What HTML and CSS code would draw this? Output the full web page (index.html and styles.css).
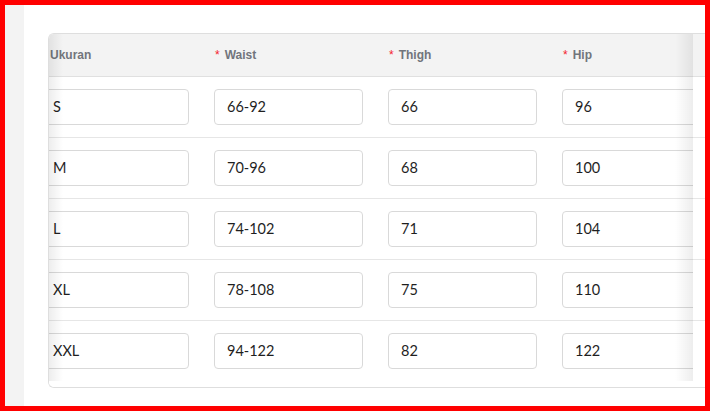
FILE: index.html
```html
<!DOCTYPE html>
<html>
<head>
<meta charset="utf-8">
<link rel="stylesheet" href="styles.css">
</head>
<body>
<div class="frame">
  <div class="side"></div>
  <div class="main">
    <div class="table">
      <div class="body">
        <div class="scroll">
          <div class="grid">
            <div class="row head">
              <div class="cell first"><span class="title">Ukuran</span></div>
              <div class="cell"><span class="req">*</span><span class="title">Waist</span></div>
              <div class="cell"><span class="req">*</span><span class="title">Thigh</span></div>
              <div class="cell"><span class="req">*</span><span class="title">Hip</span></div>
            </div>
            <div class="row">
              <div class="cell"><div class="input">S</div></div>
              <div class="cell"><div class="input">66-92</div></div>
              <div class="cell"><div class="input">66</div></div>
              <div class="cell"><div class="input">96</div></div>
            </div>
            <div class="row">
              <div class="cell"><div class="input">M</div></div>
              <div class="cell"><div class="input">70-96</div></div>
              <div class="cell"><div class="input">68</div></div>
              <div class="cell"><div class="input">100</div></div>
            </div>
            <div class="row">
              <div class="cell"><div class="input">L</div></div>
              <div class="cell"><div class="input">74-102</div></div>
              <div class="cell"><div class="input">71</div></div>
              <div class="cell"><div class="input">104</div></div>
            </div>
            <div class="row">
              <div class="cell"><div class="input">XL</div></div>
              <div class="cell"><div class="input">78-108</div></div>
              <div class="cell"><div class="input">75</div></div>
              <div class="cell"><div class="input">110</div></div>
            </div>
            <div class="row last">
              <div class="cell"><div class="input">XXL</div></div>
              <div class="cell"><div class="input">94-122</div></div>
              <div class="cell"><div class="input">82</div></div>
              <div class="cell"><div class="input">122</div></div>
            </div>
          </div>
        </div>
        <div class="fixed">
          <div class="fixed-head"></div>
          <div class="fixed-row"></div>
          <div class="fixed-row"></div>
          <div class="fixed-row"></div>
          <div class="fixed-row"></div>
          <div class="fixed-row last"></div>
        </div>
      </div>
      <div class="bar-space"></div>
    </div>
  </div>
</div>
</body>
</html>
```

FILE: styles.css
```css
* { box-sizing: border-box; }
html, body { margin: 0; padding: 0; background: #fff; }
.frame {
  width: 710px;
  height: 411px;
  border: 5px solid #ff0000;
  display: flex;
  overflow: hidden;
}
.side {
  width: 19px;
  flex: none;
  background: #f3f3f3;
}
.main {
  flex: 1;
  background: #fff;
  padding: 28px 0 0 24px;
  overflow: hidden;
}
.table {
  width: 720px;
  border: 1px solid #dedede;
  border-right: none;
  border-radius: 6px 0 0 6px;
  overflow: hidden;
}
.body {
  display: flex;
}
.scroll {
  width: 644px;
  flex: none;
  overflow: hidden;
  position: relative;
}
.scroll::before {
  content: "";
  position: absolute;
  left: 0;
  top: 0;
  bottom: 0;
  width: 14px;
  background: linear-gradient(to right, rgba(0,0,0,0.07), rgba(0,0,0,0));
  z-index: 2;
}
.grid {
  margin-left: -21px;
  width: 720px;
}
.row {
  display: flex;
  height: 61px;
  border-bottom: 1px solid #e6e6e6;
}
.row.last { height: 60px; border-bottom: none; }
.row.head {
  height: 43px;
  background: #f3f3f3;
  border-bottom: 1px solid #e0e0e0;
}
.cell {
  width: 174px;
  flex: none;
  padding: 12px 13px 12px 12px;
  display: flex;
  align-items: center;
}
.head .cell { padding: 0 12px 0 13px; }
.head .cell.first { padding-left: 22px; }
.title {
  font-family: "Liberation Sans", Arial, sans-serif;
  font-weight: bold;
  font-size: 12px;
  color: #71757c;
}
.req {
  font-family: "Liberation Sans", Arial, sans-serif;
  font-size: 12px;
  color: #f5222d;
  margin-right: 5px;
}
.input {
  width: 149px;
  height: 36px;
  border: 1px solid #d9d9d9;
  border-radius: 4px;
  padding: 0 12px 2px 12px;
  display: flex;
  align-items: center;
  font-family: Lato, "Liberation Sans", sans-serif;
  font-size: 14.5px;
  color: #1f1f1f;
  background: #fff;
}
.fixed {
  width: 40px;
  flex: none;
  position: relative;
  background: #fff;
}
.fixed::before {
  content: "";
  position: absolute;
  left: -18px;
  top: 0;
  bottom: 0;
  width: 18px;
  background: linear-gradient(to left, rgba(0,0,0,0.07), rgba(0,0,0,0));
}
.fixed-head {
  height: 43px;
  background: #f3f3f3;
  border-bottom: 1px solid #e0e0e0;
}
.fixed-row {
  height: 61px;
  border-bottom: 1px solid #e6e6e6;
}
.fixed-row.last { height: 60px; border-bottom: none; }
.bar-space {
  height: 6px;
  background: #fff;
}
```
